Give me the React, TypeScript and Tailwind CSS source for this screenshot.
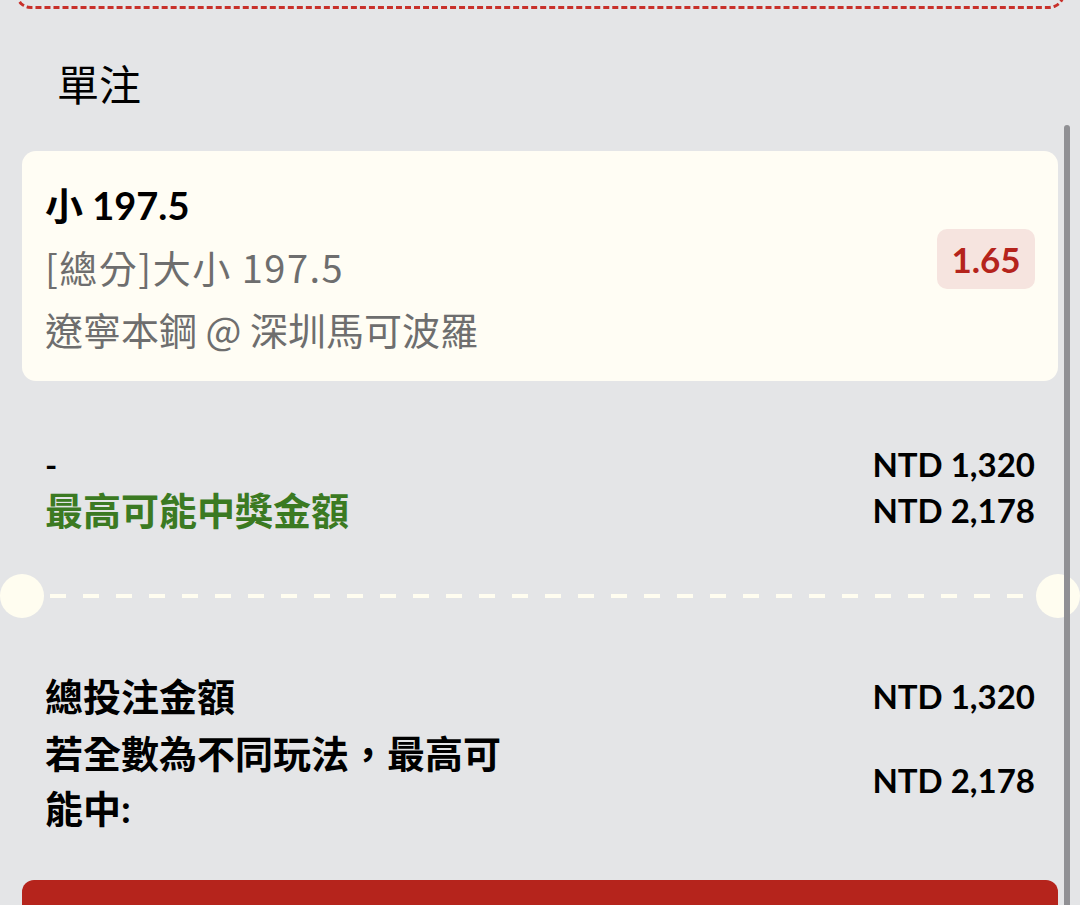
import React from 'react';

const font = "font-['Lato','Noto_Sans_CJK_TC',sans-serif]";
const cjk = "font-['Noto_Sans_CJK_TC','Noto_Sans',sans-serif]";

function AmountRow({ label, value, labelClass }: { label: string; value: string; labelClass?: string }) {
    return (
        <div className="flex items-center justify-between">
            <span className={labelClass}>{label}</span>
            <span className="text-[33px] font-bold text-black">{value}</span>
        </div>
    );
}

export default function App() {
    return (
        <div className={`relative w-[1080px] h-[905px] overflow-hidden bg-[#e4e5e7] ${font}`}>
            {/* bottom edge of the previous dashed box */}
            <div className="mx-[15px] -mt-[10px] h-[19px] rounded-b-[16px] border-[3px] border-t-0 border-dashed border-[#c8302a]" />

            {/* Title */}
            <div className="pl-[57px] pt-[46px] text-[42px] leading-[60px] text-black">單注</div>

            {/* Bet card */}
            <div className="mx-[22px] mt-[36px] flex items-center justify-between rounded-[14px] bg-[#fffdf4] pl-[23px] pr-[23px] pt-[23px] pb-[21px]">
                <div className="flex flex-col">
                    <div className="text-[38px] leading-[62px] font-bold text-black">小 197.5</div>
                    <div className={`${cjk} text-[38px] leading-[62px] tracking-[1.5px] text-[#6e6e6e]`}>[總分]大小 197.5</div>
                    <div className={`${cjk} text-[38px] leading-[62px] text-[#6e6e6e]`}>遼寧本鋼 @ 深圳馬可波羅</div>
                </div>
                <div className="mb-[16px] flex h-[60px] w-[98px] items-center justify-center rounded-[10px] bg-[#f6e4df] text-[35px] font-bold text-[#b5241c]">
                    1.65
                </div>
            </div>

            {/* Stake / potential win */}
            <div className="mt-[60px] px-[45px] leading-[46px]">
                <AmountRow label="-" value="NTD 1,320" labelClass="text-[33px] font-bold text-black" />
                <AmountRow label="最高可能中獎金額" value="NTD 2,178" labelClass="text-[38px] font-bold text-[#3b7a22]" />
            </div>

            {/* Ticket divider */}
            <div className="mt-[41px] flex items-center">
                <div className="h-[44px] w-[44px] shrink-0 rounded-full bg-[#fffdf0]" />
                <svg className="h-[4px] flex-1" preserveAspectRatio="none">
                    <line x1="6" y1="2" x2="100%" y2="2" stroke="#fffdf0" strokeWidth="4" strokeDasharray="16 17" />
                </svg>
                <div className="h-[44px] w-[44px] shrink-0 rounded-full bg-[#fffdf0]" />
            </div>

            {/* Totals */}
            <div className="mt-[51px] grid grid-cols-[1fr_auto] items-center gap-y-[2px] px-[45px]">
                <span className="text-[38px] font-bold leading-[55px] text-black">總投注金額</span>
                <span className="text-[33px] font-bold text-black">NTD 1,320</span>
                <span className="w-[470px] text-[38px] font-bold leading-[55px] text-black">若全數為不同玩法，最高可能中:</span>
                <span className="text-[33px] font-bold text-black">NTD 2,178</span>
            </div>

            {/* Place bet button (cut off) */}
            <div className="mx-[22px] mt-[44px] h-[80px] rounded-t-[12px] bg-[#b5241c]" />

            {/* Scrollbar */}
            <div className="absolute right-[10px] top-[125px] h-[800px] w-[6px] rounded-full bg-[#909094]" />
        </div>
    );
}
